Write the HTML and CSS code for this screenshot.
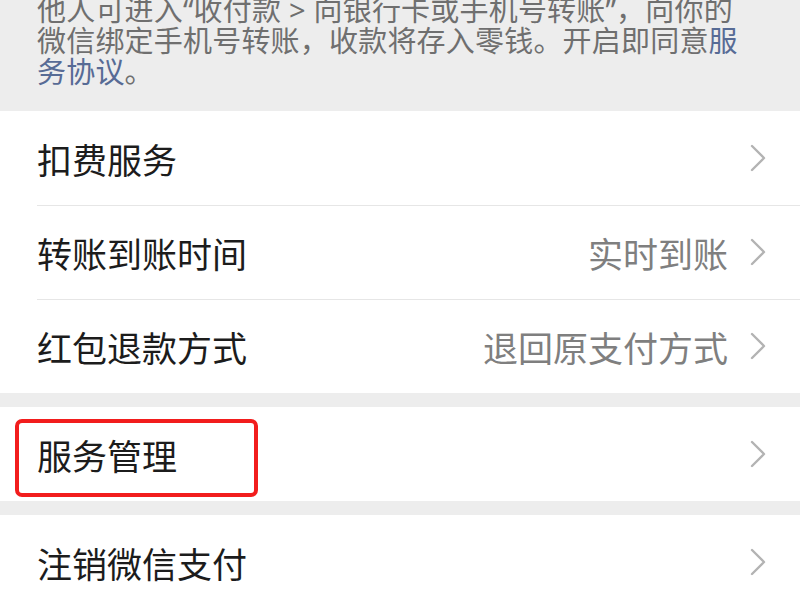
FILE: index.html
```html
<!DOCTYPE html>
<html lang="zh-CN">
<head>
<meta charset="utf-8">
<link rel="stylesheet" href="styles.css">
</head>
<body>
<div class="page">
  <div class="notice">
    <p class="notice-text">他人可进入“收付款 &gt; 向银行卡或手机号转账”，向你的微信绑定手机号转账，收款将存入零钱。开启即同意<span class="link">服务协议</span>。</p>
  </div>
  <div class="group">
    <div class="row">
      <span class="label">扣费服务</span>
      <span class="chev"><svg width="16" height="28" viewBox="0 0 16 28"><path d="M2 2 L14 14 L2 26" fill="none" stroke="#b3b3b3" stroke-width="2.4" stroke-linecap="round" stroke-linejoin="round"/></svg></span>
    </div>
    <div class="row">
      <span class="label">转账到账时间</span>
      <span class="value">实时到账</span>
      <span class="chev"><svg width="16" height="28" viewBox="0 0 16 28"><path d="M2 2 L14 14 L2 26" fill="none" stroke="#b3b3b3" stroke-width="2.4" stroke-linecap="round" stroke-linejoin="round"/></svg></span>
    </div>
    <div class="row">
      <span class="label">红包退款方式</span>
      <span class="value">退回原支付方式</span>
      <span class="chev"><svg width="16" height="28" viewBox="0 0 16 28"><path d="M2 2 L14 14 L2 26" fill="none" stroke="#b3b3b3" stroke-width="2.4" stroke-linecap="round" stroke-linejoin="round"/></svg></span>
    </div>
  </div>
  <div class="group">
    <div class="row">
      <span class="label">服务管理</span>
      <span class="chev"><svg width="16" height="28" viewBox="0 0 16 28"><path d="M2 2 L14 14 L2 26" fill="none" stroke="#b3b3b3" stroke-width="2.4" stroke-linecap="round" stroke-linejoin="round"/></svg></span>
      <span class="mark"></span>
    </div>
  </div>
  <div class="group">
    <div class="row">
      <span class="label">注销微信支付</span>
      <span class="chev"><svg width="16" height="28" viewBox="0 0 16 28"><path d="M2 2 L14 14 L2 26" fill="none" stroke="#b3b3b3" stroke-width="2.4" stroke-linecap="round" stroke-linejoin="round"/></svg></span>
    </div>
  </div>
</div>
</body>
</html>
```

FILE: styles.css
```css
html, body {
  margin: 0;
  padding: 0;
  background: #ededed;
  font-family: "Noto Sans CJK SC", "Noto Sans", sans-serif;
}

.page {
  width: 800px;
  height: 600px;
  overflow: hidden;
  display: flex;
  flex-direction: column;
  gap: 14px;
}

.notice {
  flex-shrink: 0;
  padding: 0 50px 0 37px;
  height: 97px;
  overflow: hidden;
}

.notice-text {
  margin: -6px 0 0 0;
  font-family: "Noto Sans", "Noto Sans CJK SC", sans-serif;
  font-size: 29px;
  line-height: 31px;
  letter-spacing: 0.2px;
  color: #6f6f6f;
}

.link {
  color: #576b95;
}

.group {
  background: #ffffff;
  display: flex;
  flex-direction: column;
  flex-shrink: 0;
}

.row {
  position: relative;
  height: 94px;
  display: flex;
  align-items: center;
  padding: 0 34px 0 37px;
  gap: 22px;
}

.row + .row::before {
  content: "";
  position: absolute;
  left: 37px;
  right: 0;
  top: 0;
  height: 1px;
  background: #e6e6e6;
}

.label {
  font-size: 35px;
  color: #1c1c1c;
  flex: 1;
}

.value {
  font-size: 35px;
  color: #7f7f7f;
}

.chev {
  display: flex;
  align-items: center;
}

.mark {
  position: absolute;
  left: 15px;
  top: 12px;
  width: 235px;
  height: 70px;
  border: 4px solid #f21d1d;
  border-radius: 7px;
}
```
